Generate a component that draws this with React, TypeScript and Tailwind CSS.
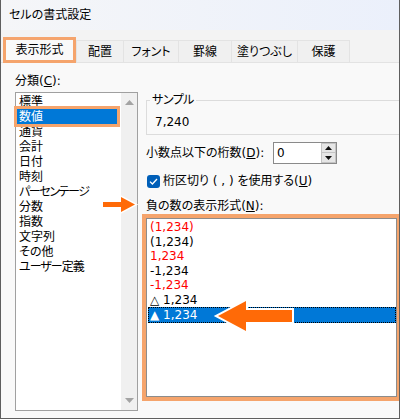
import React from 'react'

const cats = [
    { label: '標準', cls: '' },
    { label: '数値', cls: '' },
    { label: '通貨', cls: '' },
    { label: '会計', cls: '' },
    { label: '日付', cls: '' },
    { label: '時刻', cls: '' },
    { label: 'パーセンテージ', cls: 'tracking-[-1.4px]' },
    { label: '分数', cls: '' },
    { label: '指数', cls: '' },
    { label: '文字列', cls: '' },
    { label: 'その他', cls: '' },
    { label: 'ユーザー定義', cls: 'tracking-[-1px]' },
]

const tabs = [
    { label: '配置', cls: 'w-[48px] border-l' },
    { label: 'フォント', cls: 'w-[55px]' },
    { label: '罫線', cls: 'w-[53px]' },
    { label: '塗りつぶし', cls: 'w-[66px]' },
    { label: '保護', cls: 'w-[52px]' },
]

const negatives = [
    { text: '(1,234)', red: true },
    { text: '(1,234)', red: false },
    { text: '1,234', red: true },
    { text: '-1,234', red: false },
    { text: '-1,234', red: true },
    { text: '△ 1,234', red: false },
]

const App = () => {
    return (
        <div className="relative h-[420px] w-[400px] overflow-hidden bg-white font-['DejaVu_Sans','Noto_Sans_CJK_JP',sans-serif] text-[12px] text-black [font-feature-settings:'palt']">
            <div className="flex h-[419px] flex-col overflow-hidden border-x border-b border-[#5f5f5f] bg-[#f9f9f9]">
                {/* title bar */}
                <div className="flex h-[30px] shrink-0 items-center bg-gradient-to-r from-[#f5f6f8] to-[#ebf0fb] pl-[8px]">
                    セルの書式設定
                </div>

                {/* tabs */}
                <div className="flex h-[33px] shrink-0 items-end border-b border-[#e3e3e3] bg-[#f3f3f3] pl-[2px]">
                    <div className="relative z-10 -mb-px flex h-[26px] w-[73px] items-center justify-center border-[3px] border-[#f5a46c] bg-[#f9f9f9]">
                        表示形式
                    </div>
                    {tabs.map((t) => (
                        <div
                            key={t.label}
                            className={`flex h-[22px] items-center justify-center border-t border-r border-[#e3e3e3] bg-[#f0f0f0] ${t.cls}`}
                        >
                            {t.label}
                        </div>
                    ))}
                </div>

                {/* body */}
                <div className="flex flex-1 pl-[14px] pt-[10px]">
                    {/* category column */}
                    <div className="w-[123px] shrink-0">
                        <div className="leading-[16px]">
                            分類(<span className="underline">C</span>):
                        </div>
                        <div className="mt-[3px] flex h-[319px] border border-[#a0a0a0] bg-white">
                            <div className="flex-1 pt-px">
                                {cats.map((c) =>
                                    c.label === '数値' ? (
                                        <div
                                            key={c.label}
                                            className="ml-px h-[15px] w-[100px] bg-[#0078d7] pl-[2px] leading-[16px] text-white outline-3 outline-[#f5a46c]"
                                        >
                                            {c.label}
                                        </div>
                                    ) : (
                                        <div key={c.label} className={`ml-px h-[15px] whitespace-nowrap pl-[2px] leading-[16px] ${c.cls}`}>
                                            {c.label}
                                        </div>
                                    )
                                )}
                            </div>
                            <div className="flex w-[16px] flex-col items-center justify-between bg-[#f0f0f0] pb-[7px] pt-[7px]">
                                <svg width="9" height="5" viewBox="0 0 9 5">
                                    <path d="M0 5 L4.5 0 L9 5 Z" fill="#a3a3a3" />
                                </svg>
                                <svg width="9" height="5" viewBox="0 0 9 5">
                                    <path d="M0 0 L9 0 L4.5 5 Z" fill="#a3a3a3" />
                                </svg>
                            </div>
                        </div>
                    </div>

                    {/* right column */}
                    <div className="ml-[8px] flex-1">
                        <fieldset className="mt-[19px] w-[270px] border border-[#dcdcdc] pb-[4px]">
                            <legend className="ml-[3px] px-[2px] leading-[16px] tracking-[-0.5px]">サンプル</legend>
                            <div className="pl-[8px] pt-[6px] leading-[16px]">7,240</div>
                        </fieldset>

                        <div className="mt-[7px] flex h-[22px] items-center">
                            <div className="w-[127px]">
                                小数点以下の桁数(<span className="underline">D</span>):
                            </div>
                            <div className="flex h-[22px] w-[64px] border border-[#8a8a8a] bg-white">
                                <div className="flex-1 pl-[3px] leading-[20px]">0</div>
                                <div className="flex w-[15px] flex-col">
                                    <div className="flex h-[10px] items-center justify-center border border-[#c4c4c4] bg-[#e6e6e6]">
                                        <svg width="7" height="4" viewBox="0 0 7 4">
                                            <path d="M0 4 L3.5 0 L7 4 Z" fill="#111" />
                                        </svg>
                                    </div>
                                    <div className="flex h-[10px] items-center justify-center border border-t-0 border-[#c4c4c4] bg-[#e6e6e6]">
                                        <svg width="7" height="4" viewBox="0 0 7 4">
                                            <path d="M0 0 L7 0 L3.5 4 Z" fill="#111" />
                                        </svg>
                                    </div>
                                </div>
                            </div>
                        </div>

                        <div className="mt-[9px] flex h-[16px] items-center">
                            <div className="ml-px flex h-[13px] w-[13px] items-center justify-center rounded-[3px] bg-[#005fb8]">
                                <svg width="9" height="7" viewBox="0 0 9 7">
                                    <path d="M1 3.6 L3.4 6 L8 1" stroke="white" strokeWidth="1.3" fill="none" />
                                </svg>
                            </div>
                            <div className="ml-[3px]">
                                桁区切り ( , ) を使用する(<span className="underline">U</span>)
                            </div>
                        </div>

                        <div className="mt-[9px] h-[16px] leading-[16px]">
                            負の数の表示形式(<span className="underline">N</span>):
                        </div>

                        <div className="mt-[4px] h-[179px] w-[251px] border border-[#8c8c8c] bg-white pt-px outline-4 outline-[#f5a46c]">
                            {negatives.map((n, i) => (
                                <div
                                    key={i}
                                    className={`h-[14.5px] pl-[3px] leading-[15px] ${n.red ? 'text-[#ff0000]' : ''}`}
                                >
                                    {n.text}
                                </div>
                            ))}
                            <div className="ml-px h-[16px] border border-dotted border-black bg-[#0078d7] pl-px leading-[14px] text-white">
                                ▲ 1,234
                            </div>
                        </div>
                    </div>
                </div>
            </div>

            {/* annotation arrows */}
            <svg className="pointer-events-none absolute left-0 top-0" width="400" height="420" viewBox="0 0 400 420">
                <polygon
                    points="103,202 121,202 121,197 135,204.5 121,212 121,207 103,207"
                    fill="#ff6a07"
                    stroke="white"
                    strokeWidth="3"
                    paintOrder="stroke"
                />
                <polygon
                    points="292,310 246,310 246,301 218,316 246,331 246,322 292,322"
                    fill="#ff6a07"
                    stroke="white"
                    strokeWidth="4"
                    paintOrder="stroke"
                />
            </svg>
        </div>
    )
}

export default App
